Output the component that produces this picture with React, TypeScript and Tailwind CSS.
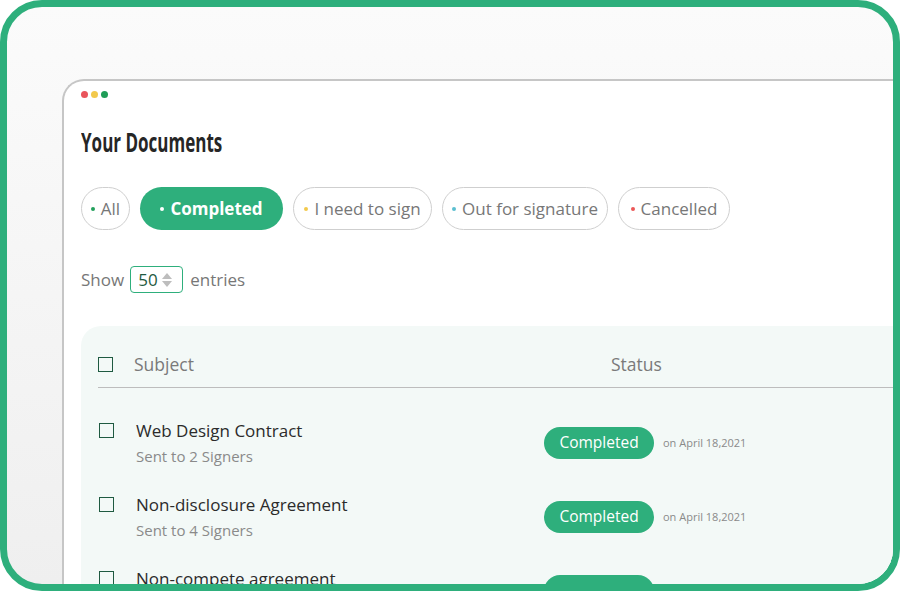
import React from "react";

const body = { fontFamily: '"Open Sans", "Noto Sans", sans-serif' };

type Filter = {
  label: string;
  dot: string;
  width: string;
  active?: boolean;
};

const filters: Filter[] = [
  { label: "All", dot: "bg-[#23a05c]", width: "w-[49px]" },
  { label: "Completed", dot: "bg-white", width: "w-[143px]", active: true },
  { label: "I need to sign", dot: "bg-[#f2c94c]", width: "w-[139px]" },
  { label: "Out for signature", dot: "bg-[#5bbfd0]", width: "w-[166px]" },
  { label: "Cancelled", dot: "bg-[#eb5757]", width: "w-[112px]" },
];

const docs = [
  { title: "Web Design Contract", sub: "Sent to 2 Signers" },
  { title: "Non-disclosure Agreement", sub: "Sent to 4 Signers" },
  { title: "Non-compete agreement", sub: "Sent to 3 Signers" },
];

const Checkbox = () => (
  <span className="block w-[15px] h-[15px] border-[1.5px] border-[#1f5a41] shrink-0" />
);

export default function App() {
  return (
    <div
      className="w-[900px] h-[591px] border-[7px] border-[#2eaf7c] rounded-[42px] overflow-hidden bg-linear-to-b from-[#fbfbfb] to-[#efefef] pt-[72px] pl-[55px]"
      style={body}
    >
      <div className="w-[900px] h-[600px] bg-white border-t-2 border-l-2 border-[#c6c6c6] rounded-tl-[22px] pt-[10px] pl-[17px]">
        {/* window dots */}
        <div className="flex gap-[3px]">
          <span className="w-[7px] h-[7px] rounded-full bg-[#e9545b]" />
          <span className="w-[7px] h-[7px] rounded-full bg-[#f2c94c]" />
          <span className="w-[7px] h-[7px] rounded-full bg-[#1f9d57]" />
        </div>

        <h1
          className="mt-[29px] text-[27px] leading-[30px] font-bold text-[#262626] origin-left scale-x-[0.63] w-max"
          style={{ fontFamily: '"Open Sans", "DejaVu Sans", sans-serif' }}
        >
          Your Documents
        </h1>

        <div className="flex gap-[10px] mt-[30px]">
          {filters.map((f) => (
            <div
              key={f.label}
              className={
                f.active
                  ? `${f.width} h-[43px] rounded-full bg-[#2eaf7c] flex items-center justify-center gap-[6px] text-white text-[17px] font-bold`
                  : `${f.width} h-[43px] rounded-full border border-[#cfcfcf] flex items-center justify-center gap-[6px] text-[#777] text-[17px]`
              }
            >
              <span className={`w-[4px] h-[4px] rounded-full shrink-0 ${f.dot}`} />
              {f.label}
            </div>
          ))}
        </div>

        <div className="flex items-center mt-[36px] text-[17px] text-[#777]">
          <span>Show</span>
          <div className="ml-[6px] w-[53px] h-[27px] border border-[#2eaf7c] rounded-[4px] flex items-center pl-[7px] gap-[3px]">
            <span className="text-[#1f5a41] text-[17px]">50</span>
            <svg width="12" height="16" viewBox="0 0 12 16">
              <path d="M6 1 L11 7 H1 Z" fill="#bdbdbd" />
              <path d="M6 15 L11 9 H1 Z" fill="#bdbdbd" />
            </svg>
          </div>
          <span className="ml-[7px]">entries</span>
        </div>

        <div className="mt-[33px] bg-[#f3f9f7] rounded-tl-[20px] pl-[17px] h-[300px]">
          <div className="flex items-center h-[62px] border-b border-[#bdbdbd] pt-[16px]">
            <Checkbox />
            <span className="ml-[21px] w-[477px] text-[17.5px] text-[#7a7a7a]">Subject</span>
            <span className="text-[17.5px] text-[#7a7a7a]">Status</span>
          </div>

          {docs.map((d) => (
            <div key={d.title} className="flex h-[74px] pt-[32px]">
              <div className="pt-[3px] pl-[1px]">
                <Checkbox />
              </div>
              <div className="ml-[22px] w-[408px]">
                <div className="text-[17px] leading-[22px] font-medium text-[#2b2b2b]">{d.title}</div>
                <div className="mt-[4px] text-[15px] leading-[20px] text-[#8a8a8a]">{d.sub}</div>
              </div>
              <div className="flex items-center h-[32px] mt-[7px]">
                <span className="w-[110px] h-[32px] rounded-full bg-[#2eaf7c] text-white text-[15.5px] flex items-center justify-center">
                  Completed
                </span>
                <span className="ml-[9px] text-[11px] text-[#8a8a8a]">on April 18,2021</span>
              </div>
            </div>
          ))}
        </div>
      </div>
    </div>
  );
}
